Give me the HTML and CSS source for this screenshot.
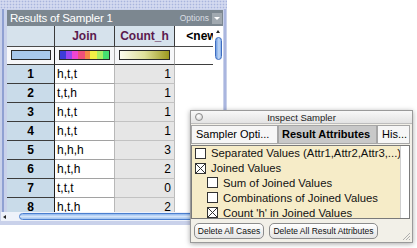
FILE: index.html
```html
<!DOCTYPE html>
<html lang="en">

<head>
    <meta charset="UTF-8">
    <title>Results of Sampler 1</title>
    <link rel="stylesheet" href="styles.css">
</head>

<body>
    <div class="desk">
        <!-- Case table window -->
        <div class="case-window">
            <div class="drag-strip"></div>
            <div class="window-body">
                <div class="title-bar">
                    <span class="title">Results of Sampler 1</span>
                    <span class="options">Options <span class="opt-btn"></span></span>
                </div>
                <div class="table-area">
                    <div class="grid-clip">
                        <div class="row head-row">
                            <div class="cell idx"></div>
                            <div class="cell">Join</div>
                            <div class="cell">Count_h</div>
                            <div class="cell new">&lt;new&gt;</div>
                        </div>
                        <div class="row swatch-row">
                            <div class="cell idx"><span class="swatch sw-idx"></span></div>
                            <div class="cell"><span class="swatch sw-join"></span></div>
                            <div class="cell"><span class="swatch sw-count"></span></div>
                            <div class="cell new"></div>
                        </div>
                        <div id="case-rows"></div>
                    </div>
                    <div class="vscroll">
                        <span class="arrow-up"></span>
                        <span class="vthumb"></span>
                    </div>
                </div>
            </div>
            <div class="hscroll">
                <span class="arrow-left"></span>
                <span class="hthumb"></span>
            </div>
        </div>

        <!-- Inspector window -->
        <div class="inspector">
            <div class="insp-title">
                <span class="close-dot"></span>
                <span class="insp-name">Inspect Sampler</span>
            </div>
            <div class="tabs">
                <div class="tab tab-opts">Sampler Opti...</div>
                <div class="tab tab-result active">Result Attributes</div>
                <div class="tab tab-hist">His...</div>
            </div>
            <div class="attr-panel">
                <div class="attr-list">
                    <div class="attr"><span class="check"></span>Separated Values (Attr1,Attr2,Attr3,...)</div>
                    <div class="attr"><span class="check checked"><svg viewBox="0 0 9 9"><path d="M0 0L9 9M9 0L0 9" /></svg></span>Joined Values</div>
                    <div class="attr sub"><span class="check"></span>Sum of Joined Values</div>
                    <div class="attr sub"><span class="check"></span>Combinations of Joined Values</div>
                    <div class="attr sub"><span class="check checked"><svg viewBox="0 0 9 9"><path d="M0 0L9 9M9 0L0 9" /></svg></span>Count 'h' in Joined Values</div>
                </div>
                <div class="attr-scroll"></div>
            </div>
            <div class="insp-buttons">
                <button class="btn btn-cases">Delete All Cases</button>
                <button class="btn btn-attrs">Delete All Result Attributes</button>
                <svg class="grip" width="8" height="8" viewBox="0 0 8 8">
                    <path d="M1 8L8 1M4 8L8 4M7 8L8 7" />
                </svg>
            </div>
        </div>
    </div>

    <script>
        // Sampler results
        const cases = [
            ['h,t,t', 1], ['t,t,h', 1], ['h,t,t', 1], ['h,t,t', 1],
            ['h,h,h', 3], ['h,t,h', 2], ['t,t,t', 0], ['h,t,h', 2]
        ];

        const rows = document.getElementById('case-rows');
        cases.forEach((c, i) => {
            const row = document.createElement('div');
            row.className = 'row data-row';
            row.innerHTML =
                '<div class="cell idx">' + (i + 1) + '</div>' +
                '<div class="cell join">' + c[0] + '</div>' +
                '<div class="cell count">' + c[1] + '</div>' +
                '<div class="cell new"></div>';
            rows.appendChild(row);
        });
    </script>
</body>

</html>
```

FILE: styles.css
```css
body {
    margin: 0;
    background: #ffffff;
    font-family: "Liberation Sans", Arial, sans-serif;
}

.desk {
    position: relative;
    width: 417px;
    height: 248px;
    overflow: hidden;
}

/* Case table window */
.case-window {
    width: 227px;
    height: 225px;
    box-sizing: border-box;
    background: #c9d1ea;
    padding-bottom: 4px;
}

.drag-strip {
    height: 9px;
    background-color: #d3d9ef;
    background-image: radial-gradient(circle, #a8b4dd 0.7px, transparent 1.1px);
    background-size: 3px 3px;
}

.window-body {
    padding: 1px 4px 0 7px;
    background:
        linear-gradient(#8fa0d2, #8fa0d2) 2px 0 / 2px 100% no-repeat,
        linear-gradient(#aab6df, #aab6df) 224px 0 / 2px 100% no-repeat;
}

.title-bar {
    height: 16px;
    background: #7c8790;
    display: flex;
    align-items: center;
    justify-content: space-between;
    padding: 0 1px 0 3px;
}

.title {
    color: #ffffff;
    font-size: 11.5px;
    letter-spacing: -0.2px;
}

.options {
    display: flex;
    align-items: center;
    gap: 3px;
    color: #d9dee3;
    font-size: 8.5px;
}

.opt-btn {
    width: 10px;
    height: 11px;
    background: #a1a9b0;
    display: flex;
    align-items: center;
    justify-content: center;
}

.opt-btn::after {
    content: "";
    border-left: 3px solid transparent;
    border-right: 3px solid transparent;
    border-top: 3px solid #ffffff;
}

.table-area {
    display: flex;
    height: 186px;
}

.grid-clip {
    flex: 1;
    overflow: hidden;
    background: #ffffff;
}

.row {
    display: grid;
    grid-template-columns: 48px 60px 60px 60px;
}

.cell {
    box-sizing: border-box;
    overflow: hidden;
    white-space: nowrap;
    font-size: 12px;
    border-right: 1px solid #a8a8a8;
    border-bottom: 1px solid #b0b0b0;
}

.cell.idx {
    border-right: 1px solid #1e1e1e;
}

.head-row {
    height: 21px;
}

.head-row .cell {
    background: #d6e2ec;
    border-bottom-color: #4a4a4a;
    border-right-color: #3a3a3a;
    color: #5b1a4e;
    font-weight: bold;
    text-align: center;
    line-height: 20px;
}

.head-row .cell.new {
    background: #ffffff;
    color: #000000;
    border-right: none;
}

.swatch-row {
    height: 18px;
}

.swatch-row .cell {
    background: #f6f7f9;
    border-bottom-color: #3e3e3e;
    padding: 3px 0 0 4px;
}

.swatch-row .cell.new {
    background: #ffffff;
    border-right: none;
}

.swatch {
    display: block;
    height: 10px;
    box-sizing: border-box;
    border: 1px solid #2a2a2a;
}

.sw-idx {
    width: 40px;
    background: #a8c8ea;
}

.sw-join {
    width: 51px;
    background: linear-gradient(to right,
        #3c3cd8 0 12%, #9a46f0 12% 25%, #f046d2 25% 37%, #f0507a 37% 50%,
        #f58a48 50% 62%, #f2f046 62% 75%, #a6f064 75% 87%, #46e070 87% 100%);
}

.sw-count {
    width: 51px;
    background: linear-gradient(to right, #fbfbec, #e0e09a, #9c9a1e);
}

.data-row {
    height: 19px;
}

.data-row .cell {
    line-height: 18px;
}

.data-row .cell.idx {
    background: #c9dbe9;
    border-bottom-color: #3c3c3c;
    font-weight: bold;
    text-align: center;
}

.data-row .cell.join {
    padding-left: 2px;
    border-bottom-color: #a2a2a2;
    border-right-color: #b8b8b8;
}

.data-row .cell.count {
    background: #e6e6e6;
    text-align: right;
    padding-right: 3px;
    border-bottom-color: #c2c2c2;
    border-right-color: #bcbcbc;
}

.data-row .cell.new {
    border: none;
}

.vscroll {
    width: 10px;
    background: #ffffff;
    display: flex;
    flex-direction: column;
    align-items: center;
}

.arrow-up {
    margin-top: 4px;
    border-left: 2px solid transparent;
    border-right: 2px solid transparent;
    border-bottom: 3px solid #222222;
}

.vthumb {
    margin-top: 4px;
    width: 7px;
    height: 23px;
    box-sizing: border-box;
    border: 1px solid #3d6cc0;
    border-radius: 4px;
    background: linear-gradient(to right, #6f9de2, #c4daf6 60%, #86afe8);
}

.hscroll {
    height: 9px;
    margin: 0 4px 0 1px;
    background: #eef2fa;
    display: flex;
    align-items: center;
}

.arrow-left {
    margin-left: 2px;
    border-top: 2px solid transparent;
    border-bottom: 2px solid transparent;
    border-right: 3px solid #222222;
}

.hthumb {
    margin-left: 13px;
    width: 210px;
    height: 7px;
    box-sizing: border-box;
    border: 1px solid #4a7fd0;
    border-radius: 4px;
    background: linear-gradient(#8fb6ec, #d4e5fa 50%, #9dc0ee);
}

/* Inspector window */
.inspector {
    position: absolute;
    left: 190px;
    top: 110px;
    width: 223px;
    height: 133px;
    box-sizing: border-box;
    border: 1px solid #9a9a9a;
    background: #f2f0e8;
    box-shadow: 0 1px 5px rgba(0, 0, 0, 0.35);
    display: flex;
    flex-direction: column;
}

.insp-title {
    height: 12px;
    display: flex;
    align-items: center;
    padding-left: 4px;
    background: linear-gradient(#f8f8f8, #e3e3e3);
    border-bottom: 1px solid #bdbdbd;
}

.close-dot {
    width: 8px;
    height: 8px;
    box-sizing: border-box;
    border-radius: 50%;
    border: 1px solid #8a8a8a;
    background: radial-gradient(circle at 40% 35%, #ffffff, #cdcdcd);
}

.insp-name {
    flex: 1;
    text-align: center;
    margin-right: 12px;
    font-size: 9.5px;
    color: #222222;
}

.tabs {
    display: flex;
    height: 19px;
    margin-top: 1px;
}

.tab {
    box-sizing: border-box;
    overflow: hidden;
    white-space: nowrap;
    border: 1px solid #a6a6a6;
    background: #f6f6f6;
    font-size: 11px;
    line-height: 17px;
    padding-left: 4px;
}

.tab-opts {
    width: 87px;
}

.tab-result {
    width: 99px;
    padding-left: 3px;
}

.tab-hist {
    width: 33px;
}

.tab.active {
    background: #c8c8c8;
    font-weight: bold;
}

.attr-panel {
    display: flex;
    height: 74px;
    margin: 1px 2px 0 0;
    box-sizing: border-box;
    border: 1px solid #7a7a7a;
    background: #f6ecc8;
}

.attr-list {
    flex: 1;
    overflow: hidden;
    padding: 0 0 0 3px;
}

.attr {
    display: flex;
    align-items: center;
    height: 14.8px;
    font-size: 11.3px;
    white-space: nowrap;
    color: #111111;
}

.attr.sub {
    padding-left: 12px;
}

.check {
    flex: none;
    width: 11px;
    height: 11px;
    box-sizing: border-box;
    border: 1px solid #333333;
    background: #ffffff;
    margin-right: 5px;
    padding: 0;
}

.check svg {
    display: block;
    width: 9px;
    height: 9px;
}

.check path {
    stroke: #333333;
    stroke-width: 1;
}

.attr-scroll {
    width: 8px;
    background: #ffffff;
    border-left: 1px solid #cfcfcf;
}

.insp-buttons {
    flex: 1;
    display: flex;
    align-items: flex-start;
    gap: 5px;
    padding: 4px 0 0 3px;
}

.btn {
    height: 16px;
    padding: 0;
    border: 1px solid #8c8c8c;
    border-radius: 5px;
    background: linear-gradient(#ffffff, #e4e4e4);
    font-family: "Liberation Sans", Arial, sans-serif;
    font-size: 8.5px;
    color: #111111;
}

.btn-cases {
    width: 70px;
}

.btn-attrs {
    width: 109px;
}

.grip {
    margin: auto 2px 2px auto;
}

.grip path {
    stroke: #b0b0b0;
    stroke-width: 1;
}
```
